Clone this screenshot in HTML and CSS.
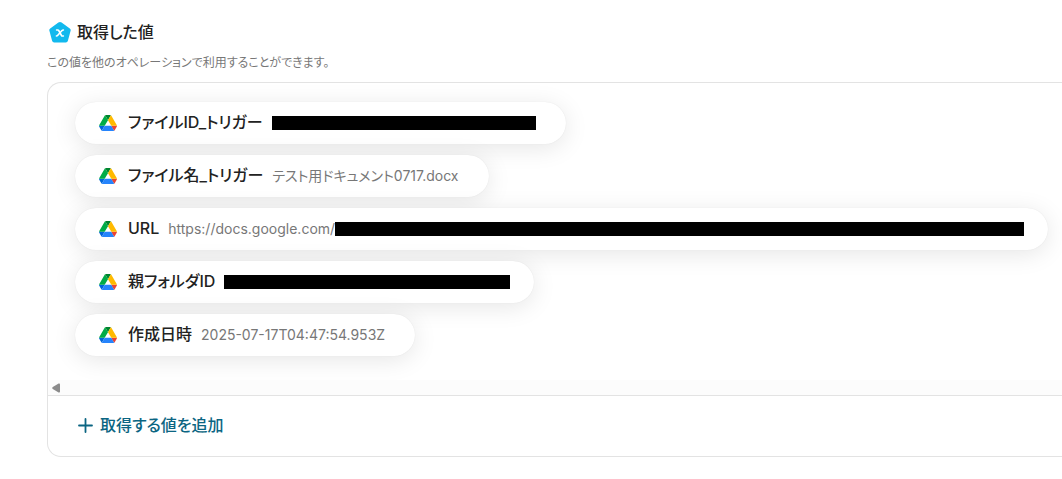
FILE: index.html
```
<!DOCTYPE html>
<html lang="ja">
<head>
  <meta charset="UTF-8">
  <meta name="viewport" content="width=device-width, initial-scale=1.0">
  <title>取得した値</title>
  <link rel="stylesheet" href="styles.css">
</head>
<body>

<svg class="defs" width="0" height="0" aria-hidden="true">
  <symbol id="drive" viewBox="0 0 87.3 78">
    <path fill="#0066da" d="m6.6 66.85 3.85 6.65c.8 1.4 1.95 2.5 3.3 3.3l13.75-23.8h-27.5c0 1.55.4 3.1 1.2 4.5z"/>
    <path fill="#00ac47" d="m43.65 25-13.75-23.8c-1.35.8-2.5 1.9-3.3 3.3l-25.4 44a9.06 9.06 0 0 0 -1.2 4.5h27.5z"/>
    <path fill="#ea4335" d="m73.55 76.8c1.35-.8 2.5-1.9 3.3-3.3l1.6-2.75 7.65-13.25c.8-1.4 1.2-2.95 1.2-4.5h-27.502l5.852 11.5z"/>
    <path fill="#00832d" d="m43.65 25 13.75-23.8c-1.35-.8-2.9-1.2-4.5-1.2h-18.5c-1.6 0-3.15.45-4.5 1.2z"/>
    <path fill="#2684fc" d="m59.8 53h-32.3l-13.75 23.8c1.35.8 2.9 1.2 4.5 1.2h50.8c1.6 0 3.15-.45 4.5-1.2z"/>
    <path fill="#ffba00" d="m73.4 26.5-12.7-22c-.8-1.4-1.95-2.5-3.3-3.3l-13.75 23.8 16.15 28h27.45c0-1.55-.4-3.1-1.2-4.5z"/>
  </symbol>
</svg>

<section class="outputs">
  <h2 class="title">
    <svg class="title-icon" viewBox="0 0 22 22" aria-hidden="true">
      <path fill="#12b9ee" d="M9.4 1.6a2.6 2.6 0 0 1 3.2 0l8.2 5.8a2.2 2.2 0 0 1 .8 2.4l-2.7 10a2.2 2.2 0 0 1-2.1 1.7H5.2a2.2 2.2 0 0 1-2.1-1.7l-2.7-10A2.2 2.2 0 0 1 1.2 7.4z"/>
      <path fill="none" stroke="#fff" stroke-width="1.6" stroke-linecap="round" stroke-linejoin="round" d="M7.6 9h1.2q.6 0 .9.5l2.8 5q.3.5.9.5h1M14.4 9q-1 0-1.6.7l-4 4.6q-.6.7-1.4.7"/>
    </svg>
    取得した値
  </h2>
  <p class="description">この値を他のオペレーションで利用することができます。</p>

  <div class="panel">
    <ul class="values">
      <li class="chip">
        <svg class="drive"><use href="#drive"/></svg>
        <span class="name">ファイルID_トリガー</span>
        <span class="value"><span class="mask mask-file"></span></span>
      </li>
      <li class="chip">
        <svg class="drive"><use href="#drive"/></svg>
        <span class="name">ファイル名_トリガー</span>
        <span class="value">テスト用ドキュメント0717.docx</span>
      </li>
      <li class="chip chip-long">
        <svg class="drive"><use href="#drive"/></svg>
        <span class="name">URL</span>
        <span class="value">https://docs.google.com/<span class="mask mask-url"></span></span>
      </li>
      <li class="chip chip-long">
        <svg class="drive"><use href="#drive"/></svg>
        <span class="name">親フォルダID</span>
        <span class="value"><span class="mask mask-folder"></span></span>
      </li>
      <li class="chip">
        <svg class="drive"><use href="#drive"/></svg>
        <span class="name">作成日時</span>
        <span class="value">2025-07-17T04:47:54.953Z</span>
      </li>
    </ul>
    <div class="scrollbar">
      <svg class="scroll-arrow" viewBox="0 0 8 10" aria-hidden="true">
        <path fill="#8b8b8b" d="M6.6.6Q8 0 8 1.4v7.2Q8 10 6.6 9.4L.8 5.9Q-.4 5 .8 4.1z"/>
      </svg>
    </div>
    <div class="footer">
      <button type="button" class="add">
        <svg class="plus" viewBox="0 0 15 15" aria-hidden="true">
          <path fill="none" stroke="currentColor" stroke-width="1.8" stroke-linecap="round" d="M7.5 1v13M1 7.5h13"/>
        </svg>
        取得する値を追加
      </button>
    </div>
  </div>
</section>

</body>
</html>
```
FILE: styles.css
```
* {
  box-sizing: border-box;
}
body {
  margin: 0;
  background-color: #fff;
  color: #222;
  font-family: Inter, "Noto Sans CJK JP", sans-serif;
  font-feature-settings: "palt";
  overflow-x: hidden;
}
.defs {
  display: block;
}
.outputs {
  padding: 20px 0 20px 47px;
}
.title {
  display: flex;
  align-items: center;
  gap: 6px;
  margin: 0;
  padding-left: 2px;
  font-size: 16px;
  font-weight: 500;
  line-height: 24px;
}
.title-icon {
  width: 22px;
  height: 22px;
}
.description {
  margin: 9px 0;
  color: #777;
  font-size: 12px;
  line-height: 20px;
}
.panel {
  border: 1px solid #e3e3e3;
  border-right: none;
  border-radius: 14px 0 0 14px;
}
.values {
  display: flex;
  flex-direction: column;
  align-items: flex-start;
  gap: 11px;
  margin: 0;
  padding: 19px 13px 24px 27px;
  list-style: none;
  overflow: hidden;
}
.chip {
  display: flex;
  align-items: center;
  height: 42px;
  padding: 0 30px 0 24px;
  background-color: #fff;
  border-radius: 21px;
  box-shadow: 0 4px 24px rgba(0, 0, 0, 0.1), 0 0 1px rgba(0, 0, 0, 0.1);
  white-space: nowrap;
}
.chip-long {
  padding-right: 24px;
}
.drive {
  flex: none;
  width: 18px;
  height: 16px;
  margin-right: 11px;
}
.name {
  margin-right: 9px;
  padding-bottom: 2px;
  font-size: 16px;
  font-weight: 500;
  line-height: 24px;
}
.value {
  display: flex;
  align-items: center;
  color: #777;
  font-size: 14px;
  line-height: 20px;
}
.mask {
  height: 14px;
  background-color: #000;
}
.mask-file {
  width: 264px;
}
.mask-url {
  width: 689px;
}
.mask-folder {
  width: 286px;
}
.scrollbar {
  display: flex;
  align-items: center;
  height: 15px;
  padding-left: 4px;
  background-color: #fcfcfc;
}
.scroll-arrow {
  width: 8px;
  height: 10px;
}
.footer {
  padding: 16px 30px 18px;
  border-top: 1px solid #e3e3e3;
}
.add {
  display: flex;
  align-items: center;
  gap: 7px;
  padding: 0;
  border: none;
  background: none;
  color: #0b6582;
  font: inherit;
  font-feature-settings: "palt";
  font-size: 16px;
  font-weight: 500;
  line-height: 26px;
  cursor: pointer;
}
.plus {
  width: 15px;
  height: 15px;
}
```
